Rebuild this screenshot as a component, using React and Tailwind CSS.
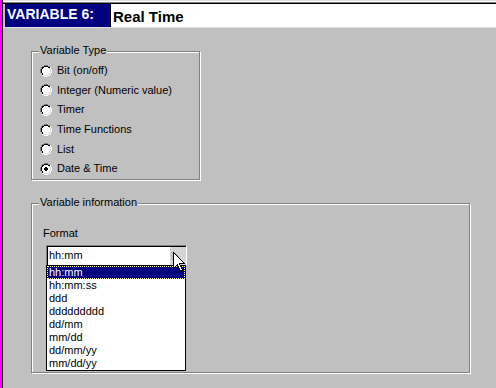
import React from "react";

const FONT = "font-['Liberation_Sans',Arial,sans-serif]";

function Radio({ checked }) {
  return (
    <svg width="12" height="12" viewBox="0 0 12 12" shapeRendering="crispEdges" className="shrink-0">
      {/* outer dark top-left */}
      <path d="M4 0h4v1H4zM2 1h2v1H2zM8 1h2v1H8zM1 2h1v2H1zM0 4h1v4H0zM1 8h1v0z" fill="#808080" />
      {/* outer white bottom-right */}
      <path d="M11 4h1v4h-1zM10 8h1v2h-1zM8 10h2v1H8zM4 11h4v1H4zM2 10h2v1H2zM10 2h1v2h-1z" fill="#ffffff" />
      {/* inner black top-left */}
      <path d="M4 1h4v1H4zM2 2h2v1H2zM8 2h2v1H8zM1 4h1v4H1zM2 3h1v1H2zM2 8h1v2H2z" fill="#000000" />
      {/* inner light bottom-right */}
      <path d="M10 4h1v4h-1zM9 8h1v1H9zM8 9h1v1H8zM4 10h4v1H4zM3 9h1v1H3z" fill="#dfdfdf" />
      {/* fill */}
      <path d="M4 2h4v1H4zM3 3h6v1H3zM2 4h8v4H2zM3 8h6v1H3zM4 9h4v1H4z" fill="#ffffff" />
      {checked && <path d="M5 4h2v1H5zM4 5h4v2H4zM5 7h2v1H5z" fill="#000000" />}
    </svg>
  );
}

function GroupBox({ label, className, children }) {
  return (
    <div
      className={`relative border border-[#808080] shadow-[inset_1px_1px_0_#ffffff,1px_1px_0_#ffffff] ${className}`}
    >
      <span className="absolute left-[7px] top-[-8px] bg-[#c0c0c0] px-px text-[11px] leading-[13px] text-black">
        {label}
      </span>
      {children}
    </div>
  );
}

const types = [
  "Bit (on/off)",
  "Integer (Numeric value)",
  "Timer",
  "Time Functions",
  "List",
  "Date & Time",
];

const formats = [
  "hh:mm",
  "hh:mm:ss",
  "ddd",
  "ddddddddd",
  "dd/mm",
  "mm/dd",
  "dd/mm/yy",
  "mm/dd/yy",
];

export default function App() {
  return (
    <div className={`flex h-[388px] w-[496px] overflow-hidden bg-[#c0c0c0] ${FONT}`}>
      <div className="w-[2px] shrink-0 bg-[#ff00ff]" />
      <div className="w-px shrink-0 bg-black" />
      <div className="flex min-w-0 flex-1 flex-col">
        {/* header */}
        <div className="flex flex-col">
          <div className="h-px bg-[#dfdfdf]" />
          <div className="h-px bg-white" />
          <div className="h-px bg-[#808080]" />
          <div className="h-px bg-black" />
          <div className="flex h-[23px]">
            <div className="w-[2px] bg-[#c0c0c0]" />
            <div className="w-[105px] bg-[#000080] pl-[2px] pt-[2px] text-[14px] font-bold leading-[16px] text-white">
              VARIABLE 6:
            </div>
            <div className="flex-1 border-l border-black bg-white pl-[2px] pt-[4px] text-[15px] font-bold leading-[17px] text-black">
              Real Time
            </div>
          </div>
          <div className="h-px bg-[#dfdfdf]" />
        </div>

        {/* Variable Type */}
        <GroupBox label="Variable Type" className="ml-[28px] mt-[23px] h-[129px] w-[169px] pt-[9px]">
          <div className="flex flex-col">
            {types.map((t, i) => (
              <div key={t} className="flex h-[19.6px] items-center gap-[5px] pl-[8px] text-[11px] leading-[13px] text-black">
                <Radio checked={i === 5} />
                <span>{t}</span>
              </div>
            ))}
          </div>
        </GroupBox>

        {/* Variable information */}
        <GroupBox
          label="Variable information"
          className="ml-[28px] mt-[23px] h-[170px] w-[439px] pl-[11px] pt-[23px]"
        >
          <div className="text-[11px] leading-[13px] text-black">Format</div>
          <div className="relative ml-[3px] mt-[5px] w-[140px]">
            {/* combo box */}
            <div className="flex h-[20px] border-l border-t border-[#808080] shadow-[1px_1px_0_#ffffff]">
              <div className="flex flex-1 border-l border-t border-black">
                <div className="flex-1 bg-white pl-px pt-[2px] text-[11px] leading-[13px] text-black">hh:mm</div>
                <div className="w-[16px] bg-[#d4d4d4]">
                  <svg width="16" height="17" viewBox="0 0 16 17" shapeRendering="crispEdges">
                    <path d="M1 5l6 6M1 8l5 5M1 11l3 3M3 4l6 6" stroke="#9a9a9a" strokeWidth="1" />
                  </svg>
                </div>
              </div>
            </div>
            {/* dropdown list */}
            <div className="absolute left-0 top-[20px] z-10 w-[140px] border border-black bg-white">
              {formats.map((f, i) => (
                <div
                  key={f}
                  className={
                    i === 0
                      ? "h-[13px] border border-dotted border-[#ffffa0] bg-[#000080] pl-[1px] text-[11px] leading-[11px] text-white"
                      : "h-[13px] pl-[2px] text-[11px] leading-[13px] text-black"
                  }
                >
                  {f}
                </div>
              ))}
            </div>
            {/* mouse cursor */}
            <svg
              className="absolute left-[127px] top-[7px] z-20"
              width="13"
              height="21"
              viewBox="0 0 13 21"
              shapeRendering="crispEdges"
            >
              <path
                d="M0.5 0.5 L0.5 16.5 L4.5 12.5 L7.5 19.5 L9.5 18.5 L6.5 11.5 L11.5 11.5 Z"
                fill="#ffffff"
                stroke="#000000"
                strokeWidth="1"
              />
            </svg>
          </div>
        </GroupBox>
      </div>
    </div>
  );
}
